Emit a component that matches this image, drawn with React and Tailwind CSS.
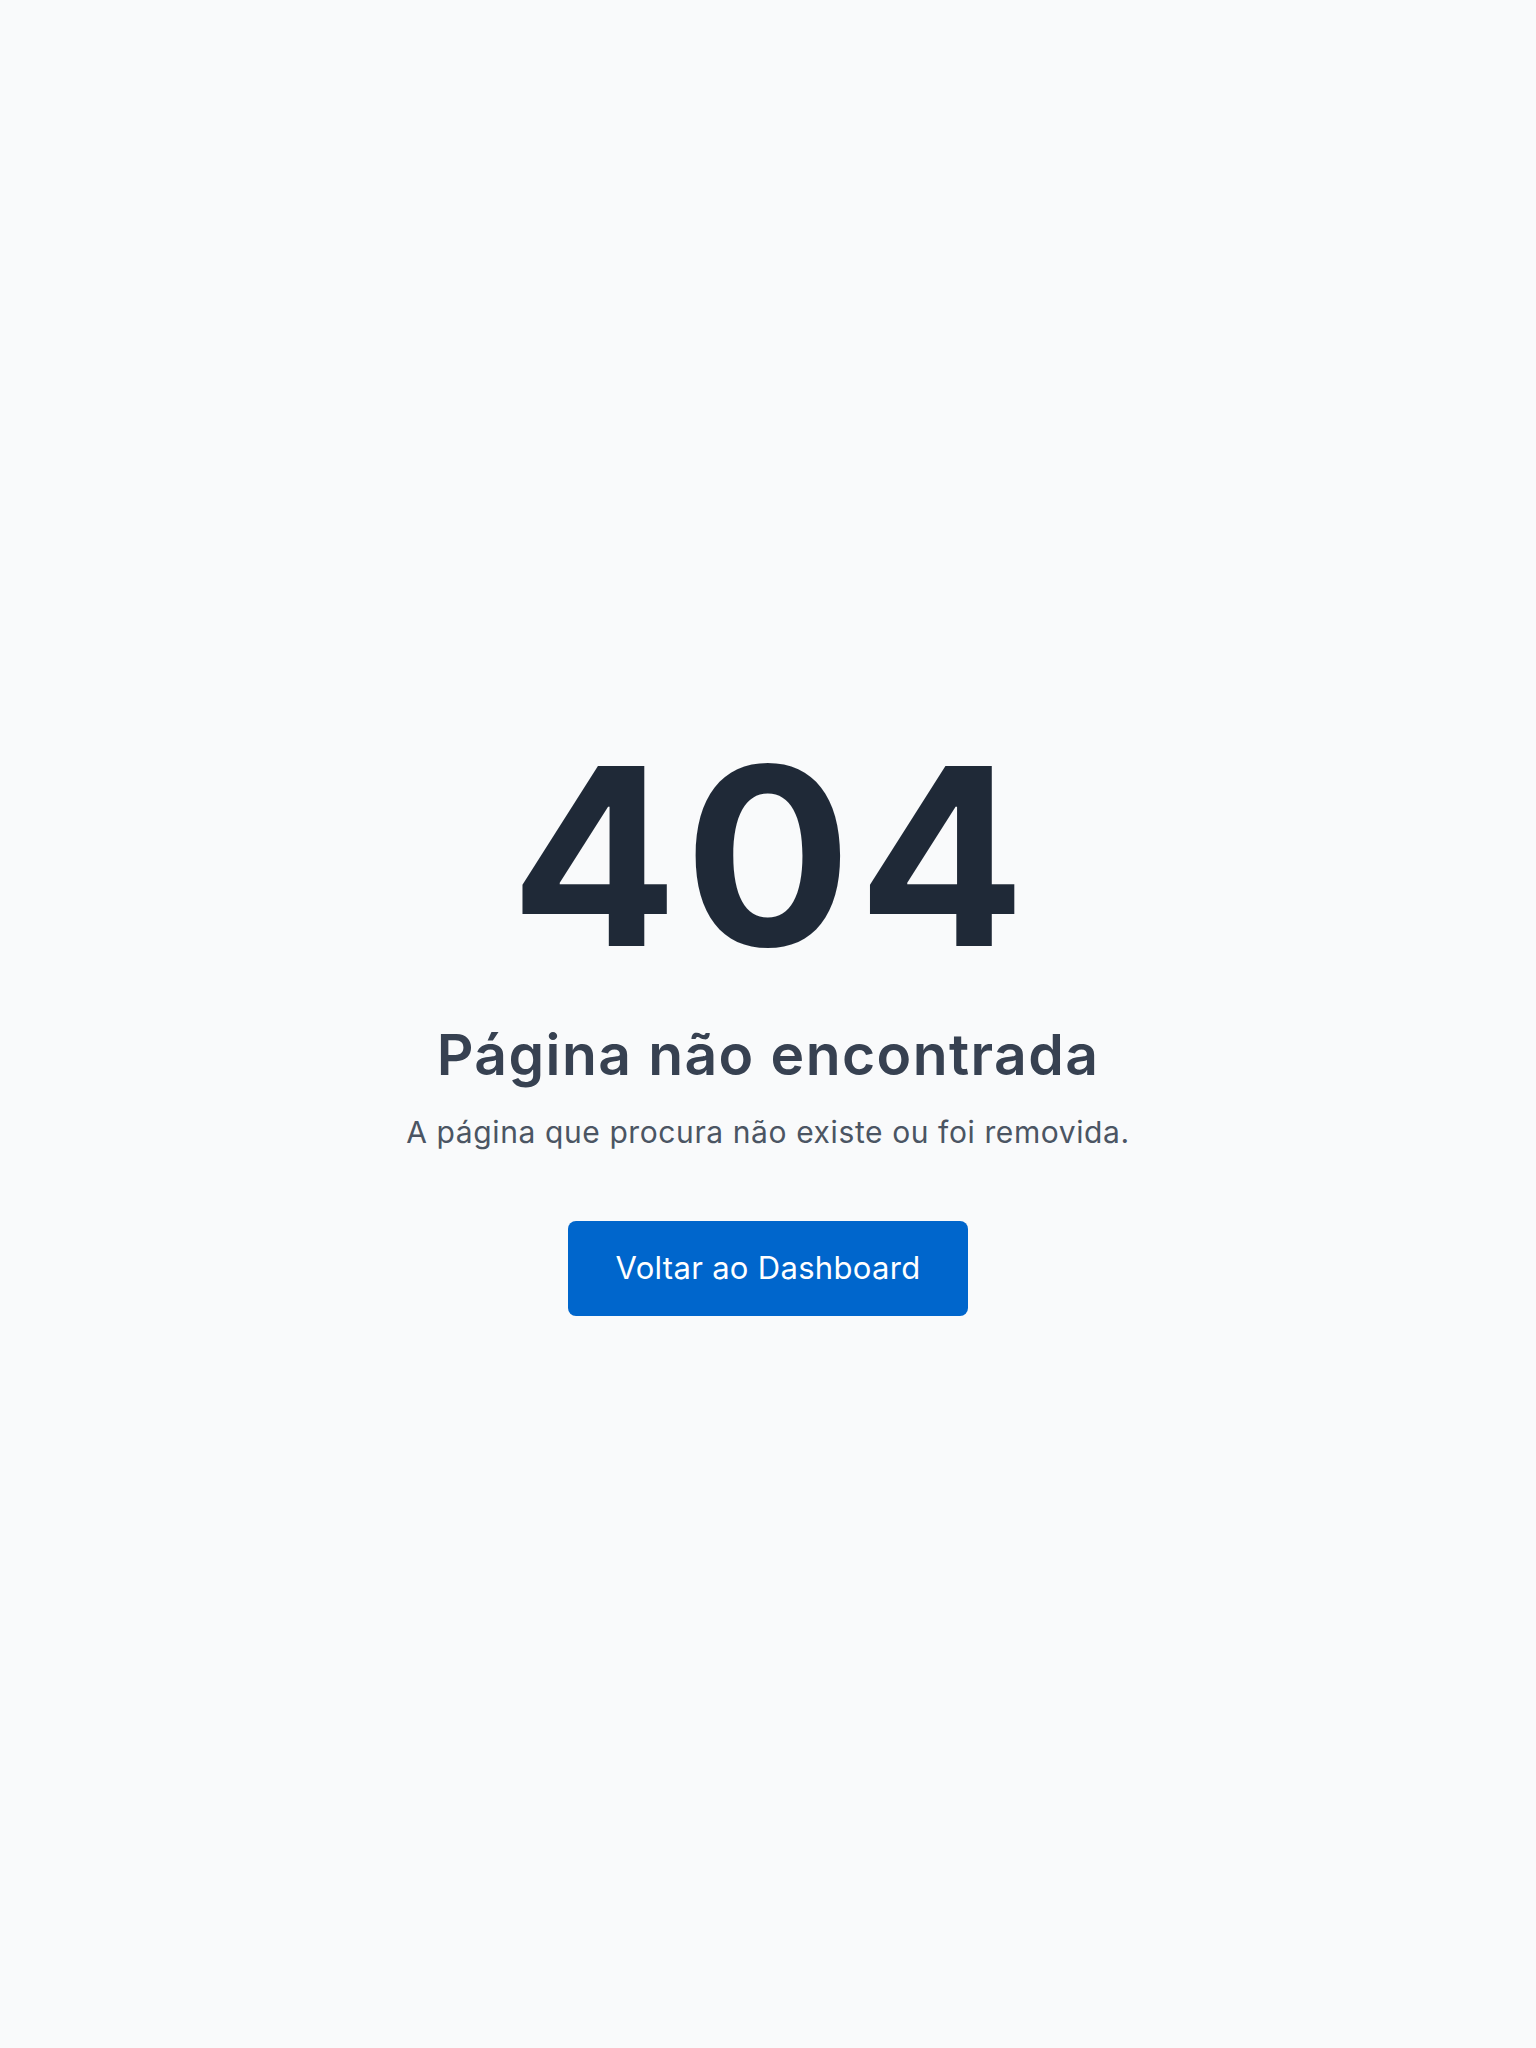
import React from "react";

export default function App() {
  return (
    <div className="min-h-screen w-full bg-[#f9fafb] flex flex-col items-center justify-center font-['Inter','Liberation_Sans',sans-serif] text-center">
      <div className="flex flex-col items-center">
        {/* 404 code */}
        <h1 className="text-[248px] leading-none font-bold text-[#1f2937] tracking-[0.025em] pl-[6px]">404</h1>

        <h2 className="mt-[39px] text-[57px] leading-[1.25] font-semibold text-[#374151] tracking-[0.025em]">
          Página não encontrada
        </h2>
        <p className="mt-[19px] text-[30px] leading-normal text-[#4b5563] tracking-[0.02em]">
          A página que procura não existe ou foi removida.
        </p>

        <button
          type="button"
          className="mt-[66px] w-[400px] h-[95px] rounded-[8px] bg-[#0066cc] text-white text-[31px] tracking-[0.01em]"
        >
          Voltar ao Dashboard
        </button>
      </div>
    </div>
  );
}
